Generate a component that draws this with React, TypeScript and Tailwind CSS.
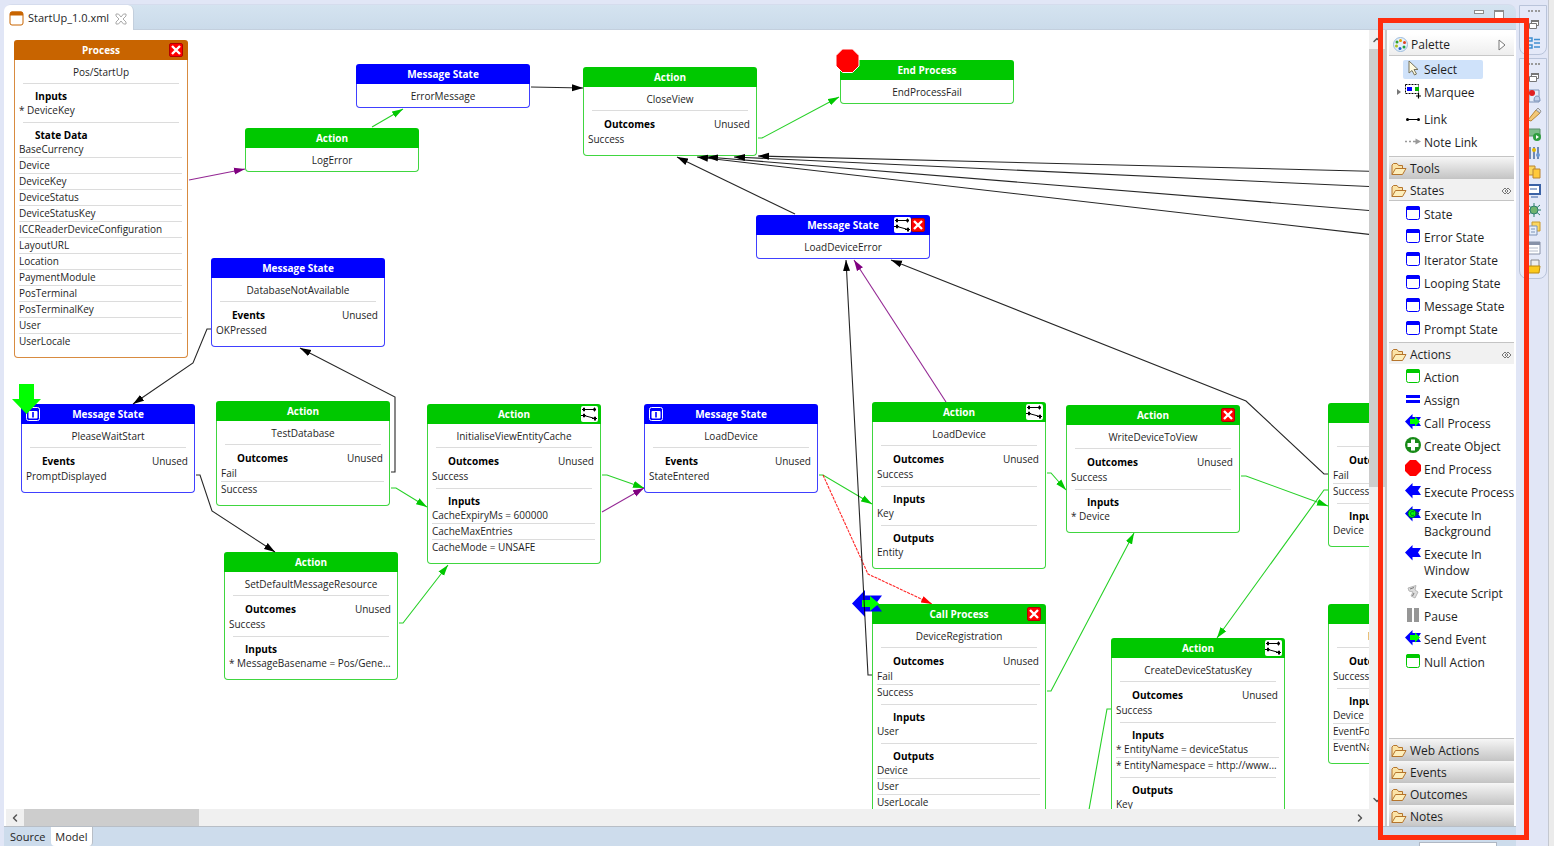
import type { ReactNode } from "react";
import { ChevronDown, ChevronLeft, ChevronRight, ChevronUp } from "lucide-react";

type Tone = "orange" | "blue" | "green";

type Section = { title: string; rows: string[]; unused?: boolean };

type FlowNode = {
  id: string;
  x: number;
  y: number;
  tone: Tone;
  kind: string;
  name: string;
  badges?: ("links" | "close")[];
  prompt?: boolean;
  sections?: Section[];
};

type Edge = { points: string; color: keyof typeof edgeColors; dashed?: boolean };

// top left corner of the visible part of the model
const SCROLL = { x: 4, y: 30 };

const headerTones: Record<Tone, string> = {
  orange: "bg-[#c86400]",
  blue: "bg-[#0000ff]",
  green: "bg-[#00c800]",
};

const borderTones: Record<Tone, string> = {
  orange: "border-[#d88b40]",
  blue: "border-[#4040ff]",
  green: "border-[#40d640]",
};

const edgeColors = {
  black: "#000000",
  green: "#00c800",
  purple: "#800080",
  red: "#ff0000",
};

const outcomes = (...rows: string[]): Section => ({ title: "Outcomes", rows, unused: true });
const events = (...rows: string[]): Section => ({ title: "Events", rows, unused: true });
const inputs = (...rows: string[]): Section => ({ title: "Inputs", rows });
const outputs = (...rows: string[]): Section => ({ title: "Outputs", rows });

const nodes: FlowNode[] = [
  {
    id: "process",
    x: 14,
    y: 40,
    tone: "orange",
    kind: "Process",
    name: "Pos/StartUp",
    badges: ["close"],
    sections: [
      inputs("* DeviceKey"),
      {
        title: "State Data",
        rows: [
          "BaseCurrency",
          "Device",
          "DeviceKey",
          "DeviceStatus",
          "DeviceStatusKey",
          "ICCReaderDeviceConfiguration",
          "LayoutURL",
          "Location",
          "PaymentModule",
          "PosTerminal",
          "PosTerminalKey",
          "User",
          "UserLocale",
        ],
      },
    ],
  },
  { id: "error", x: 356, y: 64, tone: "blue", kind: "Message State", name: "ErrorMessage" },
  { id: "log", x: 245, y: 128, tone: "green", kind: "Action", name: "LogError" },
  { id: "close", x: 583, y: 67, tone: "green", kind: "Action", name: "CloseView", sections: [outcomes("Success")] },
  { id: "end", x: 840, y: 60, tone: "green", kind: "End Process", name: "EndProcessFail" },
  { id: "loadError", x: 756, y: 215, tone: "blue", kind: "Message State", name: "LoadDeviceError", badges: ["links", "close"] },
  { id: "dbna", x: 211, y: 258, tone: "blue", kind: "Message State", name: "DatabaseNotAvailable", sections: [events("OKPressed")] },
  { id: "wait", x: 21, y: 404, tone: "blue", kind: "Message State", name: "PleaseWaitStart", prompt: true, sections: [events("PromptDisplayed")] },
  { id: "testDb", x: 216, y: 401, tone: "green", kind: "Action", name: "TestDatabase", sections: [outcomes("Fail", "Success")] },
  {
    id: "cache",
    x: 427,
    y: 404,
    tone: "green",
    kind: "Action",
    name: "InitialiseViewEntityCache",
    badges: ["links"],
    sections: [outcomes("Success"), inputs("CacheExpiryMs = 600000", "CacheMaxEntries", "CacheMode = UNSAFE")],
  },
  {
    id: "resource",
    x: 224,
    y: 552,
    tone: "green",
    kind: "Action",
    name: "SetDefaultMessageResource",
    sections: [outcomes("Success"), inputs("* MessageBasename = Pos/Gene...")],
  },
  { id: "loadMsg", x: 644, y: 404, tone: "blue", kind: "Message State", name: "LoadDevice", prompt: true, sections: [events("StateEntered")] },
  {
    id: "load",
    x: 872,
    y: 402,
    tone: "green",
    kind: "Action",
    name: "LoadDevice",
    badges: ["links"],
    sections: [outcomes("Success"), inputs("Key"), outputs("Entity")],
  },
  {
    id: "write",
    x: 1066,
    y: 405,
    tone: "green",
    kind: "Action",
    name: "WriteDeviceToView",
    badges: ["close"],
    sections: [outcomes("Success"), inputs("* Device")],
  },
  {
    id: "readStatus",
    x: 1328,
    y: 403,
    tone: "green",
    kind: "Action",
    name: "ReadStatus",
    sections: [outcomes("Fail", "Success"), inputs("Device")],
  },
  {
    id: "register",
    x: 872,
    y: 604,
    tone: "green",
    kind: "Call Process",
    name: "DeviceRegistration",
    badges: ["close"],
    sections: [outcomes("Fail", "Success"), inputs("User"), outputs("Device", "User", "UserLocale")],
  },
  {
    id: "statusKey",
    x: 1111,
    y: 638,
    tone: "green",
    kind: "Action",
    name: "CreateDeviceStatusKey",
    badges: ["links"],
    sections: [
      outcomes("Success"),
      inputs("* EntityName = deviceStatus", "* EntityNamespace = http://www..."),
      outputs("Key"),
    ],
  },
  {
    id: "publish",
    x: 1328,
    y: 604,
    tone: "green",
    kind: "Action",
    name: "RegisterDeviceEvent",
    sections: [outcomes("Success"), inputs("Device", "EventFormat", "EventName")],
  },
];

const edges: Edge[] = [
  { points: "531,87 583,88", color: "black" },
  { points: "372,127 403,109", color: "green" },
  { points: "189,180 245,169", color: "purple" },
  { points: "758,138 762,138 839,97", color: "green" },
  { points: "795,214 677,157", color: "black" },
  { points: "1400,172 758,156", color: "black" },
  { points: "1400,188 734,157", color: "black" },
  { points: "1400,213 707,157", color: "black" },
  { points: "1400,238 697,157", color: "black" },
  { points: "211,329 207,329 193,363 133,404", color: "black" },
  { points: "391,472 395,472 395,397 300,348", color: "black" },
  { points: "391,488 396,488 427,507", color: "green" },
  { points: "196,475 200,475 212,511 275,552", color: "black" },
  { points: "399,623 403,623 448,565", color: "green" },
  { points: "602,475 607,475 644,488", color: "green" },
  { points: "602,512 644,488", color: "purple" },
  { points: "819,475 823,475 872,504", color: "green" },
  { points: "823,475 868,574 932,604", color: "red", dashed: true },
  { points: "872,675 868,675 846,260", color: "black" },
  { points: "946,402 854,260", color: "purple" },
  { points: "1328,474 1324,474 1246,401 891,260", color: "black" },
  { points: "1047,473 1051,473 1066,490", color: "green" },
  { points: "1241,476 1246,476 1328,506", color: "green" },
  { points: "1328,490 1324,490 1217,638", color: "green" },
  { points: "1047,691 1051,691 1134,533", color: "green" },
  { points: "1111,709 1107,709 1080,860", color: "green" },
];

function LinksBadge() {
  return (
    <svg width="17" height="16" viewBox="0 0 17 16" className="shrink-0 last:-mr-0.5">
      <rect width="17" height="16" rx="2" fill="#fff" />
      <g stroke="#000" fill="none">
        <path d="M1 3.5H15M3 9.5L14 12.5" />
        <path d="M3 1.5V5.5M13.5 1.5V5.5M3 7.5V11.5M14 10.5V15M0 9.5H5M11 12.5H16" />
        <path d="M2 3.5H4M12.5 3.5H14.5M2 9.5H4M13 12.5H15" strokeWidth="3" />
      </g>
    </svg>
  );
}

function CloseBadge() {
  return (
    <svg width="14" height="14" viewBox="0 0 14 14" className="shrink-0">
      <rect x=".5" y=".5" width="13" height="13" rx="1.5" fill="#f00" stroke="#b40000" />
      <path d="M3 3L11 11M11 3L3 11" stroke="#fff" strokeWidth="2.4" />
    </svg>
  );
}

function PromptBadge() {
  return (
    <svg width="14" height="14" viewBox="0 0 14 14">
      <rect x=".5" y=".5" width="13" height="13" rx="2" fill="#00f" stroke="#fff" />
      <rect x="2.5" y="4" width="9" height="7.5" rx="1" fill="#fff" />
      <path d="M7 5V10.5" stroke="#00f" strokeWidth="1.6" />
    </svg>
  );
}

function NodeCard({ node }: { node: FlowNode }) {
  return (
    <div className="absolute w-[174px]" style={{ left: node.x - SCROLL.x, top: node.y - SCROLL.y }}>
      <div className={`relative h-5 rounded-t-[3px] text-center font-bold leading-5 text-white ${headerTones[node.tone]}`}>
        {node.kind}
        {node.prompt && (
          <div className="absolute left-[5px] top-[3px]">
            <PromptBadge />
          </div>
        )}
        <div className="absolute right-[5px] top-0 flex h-5 items-center">
          {node.badges?.map((b) => (b === "links" ? <LinksBadge key={b} /> : <CloseBadge key={b} />))}
        </div>
      </div>
      <div className={`rounded-b-[4px] border border-t-0 bg-white ${borderTones[node.tone]}`}>
        <div className="h-[23px] text-center leading-6">{node.name}</div>
        {node.sections && (
          <div className="pb-1">
            {node.sections.map((s) => (
              <div key={s.title} className="pb-[3px]">
                <div className="mx-2 mb-[5px] h-px bg-[#dcdcdc]" />
                <div className={`flex justify-between pl-5 pr-1.5 ${s.unused ? "h-4 leading-4" : "h-3.5 leading-[14px]"}`}>
                  <b className="text-black">{s.title}</b>
                  {s.unused && <span>Unused</span>}
                </div>
                <div className="ml-1 mr-[5px]">
                  {s.rows.map((r) => (
                    <div
                      key={r}
                      className="h-4 whitespace-nowrap border-b border-[#dcdcdc] leading-[15px] last:border-transparent"
                    >
                      {r}
                    </div>
                  ))}
                </div>
              </div>
            ))}
          </div>
        )}
      </div>
    </div>
  );
}

function Edges() {
  return (
    <svg className="pointer-events-none absolute inset-0 size-full">
      <defs>
        {Object.entries(edgeColors).map(([name, fill]) => (
          <marker
            key={name}
            id={`arrow-${name}`}
            markerUnits="userSpaceOnUse"
            markerWidth="12"
            markerHeight="8"
            refX="11"
            refY="4"
            orient="auto"
          >
            <path d="M0 .5L11 4L0 7.5Z" fill={fill} />
          </marker>
        ))}
      </defs>
      <g transform={`translate(${-SCROLL.x} ${-SCROLL.y})`}>
        {/* start marker, stop sign and call marker hang over their nodes */}
        <path d="M19 384H34V399H41L26.500 414L12 399H19Z" fill="#00ff00" />
        <path d="M842.500 49H852.500L859 55.500V66L852.500 72.500H842.500L836 66V55.500Z" fill="#f00" stroke="#fff" />
        <path d="M852 603.500L865 590V595.500H882L876 603.500L882 611.500H865V617Z" fill="#00f" />
        <path d="M862 600H870V596L879 603.500L870 611V607H862Z" fill="#00ff00" />
        {edges.map((e) => (
          <polyline
            key={e.points}
            points={e.points}
            fill="none"
            stroke={edgeColors[e.color]}
            strokeOpacity={0.85}
            strokeWidth="1.1"
            strokeDasharray={e.dashed ? "3 1" : undefined}
            markerEnd={`url(#arrow-${e.color})`}
          />
        ))}
      </g>
    </svg>
  );
}

function WindowIcon({ color }: { color: string }) {
  return (
    <svg width="16" height="16" viewBox="0 0 16 16">
      <rect x="1.500" y="1.500" width="13" height="13" rx="2" fill="#fff" stroke={color} />
      <path d="M1 5V3Q1 1 3 1H13Q15 1 15 3V5Z" fill={color} />
    </svg>
  );
}

function ArrowIcon({ overlay }: { overlay?: "arrow" | "gear" }) {
  return (
    <svg width="16" height="16" viewBox="0 0 16 16">
      <path d="M0 7.500L7.500 0V3H16L13 7.500L16 12H7.500V15.500Z" fill="#00f" />
      {overlay === "arrow" && <path d="M5 5H10V2.500L15 7.500L10 12.500V10H5Z" fill="#00ff00" />}
      {overlay === "gear" && (
        <g>
          <circle cx="7" cy="7.500" r="4" fill="#00ff00" stroke="#063" />
          <path d="M9 6Q6 4.500 5.500 7.500Q6 10.500 9 9M11 6L14 7.500L11 9Z" fill="none" stroke="#063" />
        </g>
      )}
    </svg>
  );
}

function FolderIcon() {
  return (
    <svg width="16" height="14" viewBox="0 0 16 14">
      <path d="M1 12.500V3L2.500 1.500H6L7.500 3.500H11.500V6" fill="#fbe3a6" stroke="#b5752c" />
      <path d="M1 12.500L4.500 6.500H15L11.500 12.500Z" fill="#fdeebb" stroke="#b5752c" strokeLinejoin="round" />
    </svg>
  );
}

const paletteIcons: Record<string, ReactNode> = {
  select: (
    <svg width="16" height="16" viewBox="0 0 16 16">
      <path d="M4 1V13L7 10.500L9.500 15L11.500 14L9 9.500H13Z" fill="#fffbe0" stroke="#77735c" />
    </svg>
  ),
  marquee: (
    <svg width="16" height="16" viewBox="0 0 16 16">
      <rect x=".5" y="1.500" width="13" height="9" fill="none" stroke="#000" strokeDasharray="2 1" />
      <path d="M2 4H7V8H2Z" fill="#00f" />
      <path d="M10 4H14V8H10Z" fill="#00b400" />
      <path d="M13.500 10V15.500M11 13H16" stroke="#000" strokeWidth="1.200" />
    </svg>
  ),
  link: (
    <svg width="16" height="16" viewBox="0 0 16 16">
      <path d="M2 9.500H14" stroke="#000" />
      <circle cx="2.500" cy="9.500" r="1.500" />
      <circle cx="13.500" cy="9.500" r="1.500" />
    </svg>
  ),
  note: (
    <svg width="16" height="16" viewBox="0 0 16 16">
      <path d="M0 8.500H2M4 8.500H6M8 8.500H12" stroke="#999" strokeWidth="1.500" />
      <path d="M10.500 5.500L16 8.500L10.500 11.500Z" fill="#999" />
    </svg>
  ),
  state: <WindowIcon color="#0000ff" />,
  action: <WindowIcon color="#00c800" />,
  assign: (
    <svg width="16" height="16" viewBox="0 0 16 16">
      <path d="M1 5.500H15M1 10.500H15" stroke="#00f" strokeWidth="3" />
    </svg>
  ),
  call: <ArrowIcon overlay="arrow" />,
  execute: <ArrowIcon />,
  background: <ArrowIcon overlay="gear" />,
  create: (
    <svg width="16" height="16" viewBox="0 0 16 16">
      <circle cx="8" cy="8" r="8" fill="#178a17" />
      <path d="M6 2.500H10V6H13.500V10H10V13.500H6V10H2.500V6H6Z" fill="#fff" />
    </svg>
  ),
  end: (
    <svg width="16" height="16" viewBox="0 0 16 16">
      <path d="M5 0H11L16 5V11L11 16H5L0 11V5Z" fill="#f00" />
    </svg>
  ),
  script: (
    <svg width="16" height="16" viewBox="0 0 16 16">
      <path d="M3 4L11 1.500L10 6L13 8L10 14L6 12L8 8L4 7Z" fill="#dcdcdc" stroke="#aaa" strokeWidth=".8" />
      <path d="M5 5L9 3.500M9 9L7.500 12" stroke="#777" />
    </svg>
  ),
  pause: (
    <svg width="16" height="16" viewBox="0 0 16 16">
      <path d="M2 1H7V15H2ZM9 1H14V15H9Z" fill="#969696" />
    </svg>
  ),
};

function Tool({ icon, label, selected, menu }: { icon: string; label: string; selected?: boolean; menu?: boolean }) {
  return (
    <button
      className={`relative -mr-0.5 ml-[14px] flex min-h-[19px] gap-[3px] self-start rounded-[2px] pl-0.5 text-left leading-4 ${
        selected ? "w-20 bg-[#cfe2fa]" : ""
      }`}
    >
      {menu && (
        <svg width="4" height="6" viewBox="0 0 4 6" className="absolute -left-1.5 top-1.5">
          <path d="M0 0L4 3L0 6Z" fill="#777" />
        </svg>
      )}
      <span className="shrink-0">{paletteIcons[icon]}</span>
      <span className="max-w-[92px] pb-px pt-0.5">{label}</span>
    </button>
  );
}

function Drawer({ label, open }: { label: string; open?: boolean }) {
  return (
    <button
      aria-expanded={!!open}
      className={`flex h-[22px] w-full shrink-0 items-center gap-[3px] border-t border-[#c4c4c4] pl-0.5 pr-0.5 pt-0.5 ${
        open ? "bg-[#f1f1f1]" : "bg-linear-to-b from-[#f6f6f6] to-[#c6c6c6]"
      }`}
    >
      <FolderIcon />
      <span className="grow text-left">{label}</span>
      {open && (
        <svg width="11" height="8" viewBox="0 0 11 8" fill="none" stroke="#777">
          <path d="M4 1L1 4L4 7L7 4ZM7 1L10 4L7 7L4 4Z" />
        </svg>
      )}
    </button>
  );
}

const states = ["State", "Error State", "Iterator State", "Looping State", "Message State", "Prompt State"];

const actions = [
  ["action", "Action"],
  ["assign", "Assign"],
  ["call", "Call Process"],
  ["create", "Create Object"],
  ["end", "End Process"],
  ["execute", "Execute Process"],
  ["background", "Execute In Background"],
  ["execute", "Execute In Window"],
  ["script", "Execute Script"],
  ["pause", "Pause"],
  ["call", "Send Event"],
  ["action", "Null Action"],
];

function Palette() {
  return (
    <aside className="flex w-[131px] shrink-0 flex-col border-x-2 border-l-[#c8c8c8] border-r-white bg-white pl-0.5 pt-1">
      <div className="flex h-[22px] shrink-0 items-center gap-[3px] border-b border-[#c8c8c8] bg-linear-to-b from-white to-[#eeeeee] pl-1 pr-2">
        <svg width="15" height="15" viewBox="0 0 15 15">
          <circle cx="7.500" cy="7.500" r="7" fill="#e6f0fa" stroke="#9bbbdc" />
          <circle cx="7.500" cy="3.500" r="1.500" fill="#e8a000" />
          <circle cx="11.500" cy="5.500" r="1.500" fill="#e04020" />
          <circle cx="11" cy="10" r="1.500" fill="#20a040" />
          <circle cx="7" cy="11.500" r="1.500" fill="#2060d0" />
          <circle cx="3.500" cy="9" r="1.500" fill="#b0c020" />
          <circle cx="4" cy="5" r="1.500" fill="#30a030" />
        </svg>
        <span className="grow">Palette</span>
        <button aria-label="Hide palette">
          <svg width="8" height="12" viewBox="0 0 8 12">
            <path d="M1 1L7 6L1 11Z" fill="#fff" stroke="#777" />
          </svg>
        </button>
      </div>
      <div className="flex flex-col gap-1 pt-1">
        <Tool icon="select" label="Select" selected />
        <Tool icon="marquee" label="Marquee" menu />
        <div className="mt-1 flex flex-col gap-1">
          <Tool icon="link" label="Link" />
          <Tool icon="note" label="Note Link" />
        </div>
      </div>
      <div className="h-1 shrink-0" />
      <Drawer label="Tools" />
      <Drawer label="States" open />
      <div className="flex flex-col gap-1 border-t border-[#c4c4c4] pb-[3px] pt-1">
        {states.map((s) => (
          <Tool key={s} icon="state" label={s} />
        ))}
      </div>
      <Drawer label="Actions" open />
      <div className="flex flex-col gap-1 pt-1">
        {actions.map(([icon, label]) => (
          <Tool key={label} icon={icon} label={label} />
        ))}
      </div>
      <div className="mt-auto">
        <Drawer label="Web Actions" />
        <Drawer label="Events" />
        <Drawer label="Outcomes" />
        <Drawer label="Notes" />
      </div>
    </aside>
  );
}

const restoreIcon = (
  <>
    <path d="M5.500 4.500H12.500V9.500H5.500Z" fill="#fff" stroke="#777" />
    <path d="M5 5H13" stroke="#777" strokeWidth="2" />
    <path d="M3.500 7.500H10.500V12.500H3.500Z" fill="#fff" stroke="#777" />
  </>
);

const outlineView = (
  <path d="M2 3H6V6H2ZM2 10H6V13H2ZM8 4.500H14M8 8H14M8 12H14" fill="none" stroke="#3f8fd0" strokeWidth="1.500" />
);

const views: [string, ReactNode][] = [
  ["Problems", <><path d="M3 2H13V14H3Z" fill="#e4ecf8" stroke="#7d93b8" /><circle cx="6" cy="5" r="3" fill="#e02020" /><path d="M8 13Q8 8 11 8Q14 8 14 13Z" fill="#c4d2ec" stroke="#7d93b8" /></>],
  ["Search", <><path d="M2 13L10 3L14 6L5 14Z" fill="#f3c877" stroke="#b98432" /><path d="M10 3L12 1L15 4L14 6Z" fill="#ddd" stroke="#999" /></>],
  ["Servers", <><path d="M1 3H14V10H1Z" fill="#7dbd8a" stroke="#5c8f6c" /><circle cx="11" cy="11" r="4" fill="#2f9e3f" /><path d="M10 9L13 11L10 13Z" fill="#fff" /></>],
  ["Properties", <><path d="M4 2V14M8 2V14M12 2V14" stroke="#4a6a9a" strokeWidth="1.500" /><circle cx="8" cy="5" r="2" fill="#e6b800" /><circle cx="12" cy="10" r="2" fill="#6f9ad3" /></>],
  ["Data Sources", <><path d="M2 2H9V11H2Z" fill="#fbd65f" stroke="#b98432" /><path d="M7 5H14V14H7Z" fill="#ffc93a" stroke="#b98432" /></>],
  ["Console", <><path d="M1 2H14V11H1Z" fill="#fff" stroke="#3b62a6" strokeWidth="2" /><path d="M4 6H11M5 14H12" stroke="#3b62a6" /></>],
  ["Debug", <><path d="M2 3L14 13M14 3L2 13M1 8H15M8 1V15" stroke="#2f7f6f" /><circle cx="8" cy="8" r="4" fill="#6fb36f" stroke="#2f7f6f" /></>],
  ["History", <><path d="M6 1H14V10H6Z" fill="#fbd65f" stroke="#c99a2e" /><path d="M3 5H11V14H3Z" fill="#e6eefa" stroke="#7d93b8" /><path d="M5 8H9M5 11H9" stroke="#7d93b8" /></>],
  ["Table", <><path d="M1 2H14V14H1Z" fill="#fff" stroke="#8792a8" /><path d="M1 3.500H14" stroke="#8792a8" strokeWidth="3" /><path d="M3 8H12M3 11H12" stroke="#b4bccb" /></>],
  ["Project", <><path d="M5 1H13V8H5Z" fill="#eee" stroke="#888" /><path d="M1 7H14L13 14H1Z" fill="#fbc91d" stroke="#b98a10" /></>],
];

function TrimButton({ label, children }: { label: string; children: ReactNode }) {
  return (
    <button aria-label={label} className="h-[19px]">
      <svg width="16" height="16" viewBox="0 0 16 16">
        {children}
      </svg>
    </button>
  );
}

function TrimStack({ children }: { children: ReactNode }) {
  return (
    <div className="flex flex-col items-center rounded-b-lg border border-[#b9c4da] bg-[#e4e9f8] pb-0.5 pl-0.5 pt-1">
      <div className="w-3 border-t-2 border-dotted border-[#999999] pb-0.5" />
      {children}
    </div>
  );
}

export default function App() {
  return (
    <div className="relative flex h-screen overflow-hidden bg-[#e1e6f6] pl-1 font-['Open_Sans','Noto_Sans',sans-serif] text-xs text-[#1e1e1e]">
      <main className="flex min-w-0 grow flex-col pt-1">
        <div className="flex h-[26px] shrink-0 items-stretch rounded-t-lg border-y border-t-[#d5dced] border-b-[#c3cfdd] bg-linear-to-b from-[#d4e3f0] to-[#cbdbea] text-[11px]">
          <div className="-mb-px flex items-center gap-1 rounded-t-md border-r border-[#c3cfdd] bg-white pl-[5px] pr-1.5 pt-0.5">
            <svg width="15" height="15" viewBox="0 0 15 15">
              <rect x="1" y="1" width="13" height="13" rx="2" fill="#fff" stroke="#c86400" />
              <path d="M1 4.500V2.500Q1 .5 3 .5H12Q14 .5 14 2.500V4.500Z" fill="#c86400" />
            </svg>
            <span>StartUp_1.0.xml</span>
            <button aria-label="Close tab" className="ml-0.5">
              <svg width="12" height="12" viewBox="0 0 12 12">
                <path d="M1 1H3.500L6 4L8.500 1H11V3L8 6L11 9V11H8.500L6 8L3.500 11H1V9L4 6L1 3Z" fill="#fff" stroke="#aaa" />
              </svg>
            </button>
          </div>
          <div className="ml-auto flex items-start gap-2.5 pr-3 pt-[5px]">
            <button aria-label="Minimize" className="h-1 w-2.5 border border-[#8c8c8c] bg-white" />
            <button aria-label="Maximize" className="h-[9px] w-2.5 border border-t-2 border-[#8c8c8c] bg-white" />
          </div>
        </div>

        <div className="flex min-h-0 grow">
          <div className="flex min-w-0 grow flex-col bg-white">
            <div className="relative min-h-0 grow overflow-hidden text-[10px]">
              {nodes.map((n) => (
                <NodeCard key={n.id} node={n} />
              ))}
              <Edges />
            </div>
            <div className="ml-0.5 flex h-[17px] shrink-0 items-center bg-[#f0f0f0] text-[#555555]">
              <button aria-label="Scroll left" className="px-[3px]">
                <ChevronLeft size={12} strokeWidth={3} />
              </button>
              <div className="h-full w-[175px] bg-[#cdcdcd]" />
              <button aria-label="Scroll right" className="ml-auto pr-[3px]">
                <ChevronRight size={12} strokeWidth={3} />
              </button>
            </div>
          </div>
          <div className="flex w-4 shrink-0 flex-col items-center bg-[#f0f0f0] pb-5 text-[#555555]">
            <button aria-label="Scroll up" className="flex h-[19px] items-center">
              <ChevronUp size={12} strokeWidth={3} />
            </button>
            <div className="h-[438px] w-full bg-[#cdcdcd]" />
            <button aria-label="Scroll down" className="mt-auto">
              <ChevronDown size={12} strokeWidth={3} />
            </button>
          </div>
          <Palette />
        </div>

        <div className="flex h-5 shrink-0 border-t border-[#b8bec6] bg-[#cddcec] text-[11px]">
          <button className="px-1.5 pt-0.5">Source</button>
          <button className="rounded-b-sm border-r border-[#b8bec6] bg-white px-1 pt-0.5">Model</button>
          <div className="ml-auto mr-[19px] h-1 w-[78px] self-end border border-b-0 border-[#b0b8c4] bg-white" />
        </div>
      </main>

      <div className="flex w-8 shrink-0 flex-col gap-[3px] pl-[3px] pr-px pt-[5px]">
        <TrimStack>
          <TrimButton label="Restore outline">{restoreIcon}</TrimButton>
          <TrimButton label="Outline">{outlineView}</TrimButton>
        </TrimStack>
        <TrimStack>
          <TrimButton label="Restore views">{restoreIcon}</TrimButton>
          {views.map(([label, icon]) => (
            <TrimButton key={label} label={label}>
              {icon}
            </TrimButton>
          ))}
        </TrimStack>
      </div>
      <div className="w-1.5 shrink-0 border-l border-[#c4c8d0] bg-[#ebebeb]" />

      {/* highlight round the palette */}
      <div className="pointer-events-none absolute bottom-1.5 right-[25px] top-[18px] w-[151px] border-[5px] border-[#ff2d0e]" />
    </div>
  );
}
